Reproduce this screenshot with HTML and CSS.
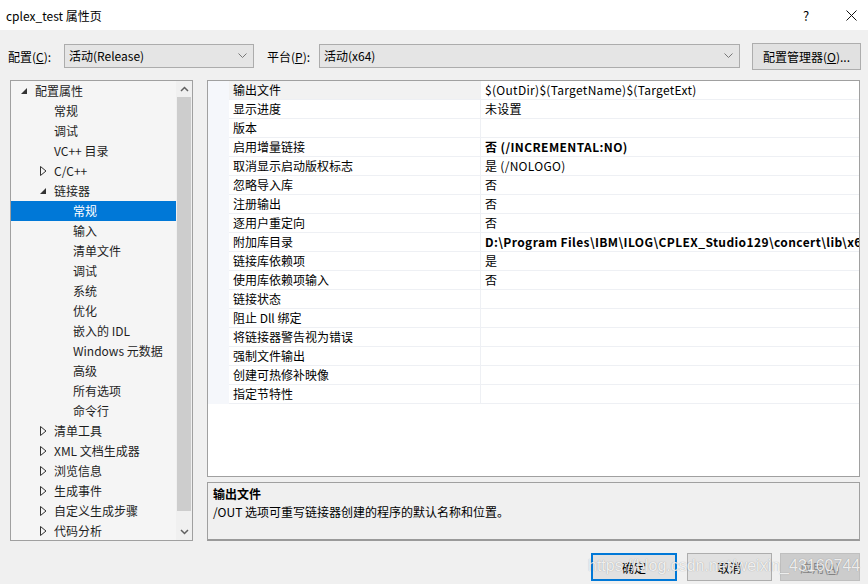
FILE: index.html
```html
<!doctype html>
<html lang="zh-CN">
<head>
	<meta charset="UTF-8" />
	<title>cplex_test 属性页</title>
<link rel="stylesheet" href="styles.css">
</head>
<body>
	<div class="window">
		<header class="titlebar">
			<span class="title">cplex_test 属性页</span>
			<span class="tb-help">?</span>
			<span class="tb-close">
				<svg width="11" height="11" viewBox="0 0 11 11"><path d="M0.5 0.5L10.5 10.5M10.5 0.5L0.5 10.5" stroke="#111" stroke-width="1"/></svg>
			</span>
		</header>

		<div class="toolbar">
			<label class="lbl lbl-config">配置(<u>C</u>):</label>
			<div class="select sel-config">
				<span>活动(Release)</span>
				<svg class="chev" width="9" height="5" viewBox="0 0 9 5"><path d="M0.5 0.5L4.5 4.5L8.5 0.5" fill="none" stroke="#777"/></svg>
			</div>
			<label class="lbl lbl-platform">平台(<u>P</u>):</label>
			<div class="select sel-platform">
				<span>活动(x64)</span>
				<svg class="chev" width="9" height="5" viewBox="0 0 9 5"><path d="M0.5 0.5L4.5 4.5L8.5 0.5" fill="none" stroke="#777"/></svg>
			</div>
			<button class="btn btn-manager">配置管理器(<u>O</u>)...</button>
		</div>

		<div class="main">
			<div class="tree">
				<ul class="tree-list">
					<li class="l0"><span class="tg"><svg width="6" height="6" viewBox="0 0 6 6"><path d="M6 0V6H0Z" fill="#333"/></svg></span>配置属性</li>
					<li class="l1"><span class="tg"></span>常规</li>
					<li class="l1"><span class="tg"></span>调试</li>
					<li class="l1"><span class="tg"></span>VC++ 目录</li>
					<li class="l1"><span class="tg"><svg width="7" height="10" viewBox="0 0 7 10"><path d="M0.5 0.5L6 5L0.5 9.5Z" fill="none" stroke="#333"/></svg></span>C/C++</li>
					<li class="l1"><span class="tg"><svg width="6" height="6" viewBox="0 0 6 6"><path d="M6 0V6H0Z" fill="#333"/></svg></span>链接器</li>
					<li class="l2 selected"><span class="tg"></span>常规</li>
					<li class="l2"><span class="tg"></span>输入</li>
					<li class="l2"><span class="tg"></span>清单文件</li>
					<li class="l2"><span class="tg"></span>调试</li>
					<li class="l2"><span class="tg"></span>系统</li>
					<li class="l2"><span class="tg"></span>优化</li>
					<li class="l2"><span class="tg"></span>嵌入的 IDL</li>
					<li class="l2"><span class="tg"></span>Windows 元数据</li>
					<li class="l2"><span class="tg"></span>高级</li>
					<li class="l2"><span class="tg"></span>所有选项</li>
					<li class="l2"><span class="tg"></span>命令行</li>
					<li class="l1"><span class="tg"><svg width="7" height="10" viewBox="0 0 7 10"><path d="M0.5 0.5L6 5L0.5 9.5Z" fill="none" stroke="#333"/></svg></span>清单工具</li>
					<li class="l1"><span class="tg"><svg width="7" height="10" viewBox="0 0 7 10"><path d="M0.5 0.5L6 5L0.5 9.5Z" fill="none" stroke="#333"/></svg></span>XML 文档生成器</li>
					<li class="l1"><span class="tg"><svg width="7" height="10" viewBox="0 0 7 10"><path d="M0.5 0.5L6 5L0.5 9.5Z" fill="none" stroke="#333"/></svg></span>浏览信息</li>
					<li class="l1"><span class="tg"><svg width="7" height="10" viewBox="0 0 7 10"><path d="M0.5 0.5L6 5L0.5 9.5Z" fill="none" stroke="#333"/></svg></span>生成事件</li>
					<li class="l1"><span class="tg"><svg width="7" height="10" viewBox="0 0 7 10"><path d="M0.5 0.5L6 5L0.5 9.5Z" fill="none" stroke="#333"/></svg></span>自定义生成步骤</li>
					<li class="l1"><span class="tg"><svg width="7" height="10" viewBox="0 0 7 10"><path d="M0.5 0.5L6 5L0.5 9.5Z" fill="none" stroke="#333"/></svg></span>代码分析</li>
				</ul>
				<div class="vscroll">
					<div class="arrow"><svg width="9" height="6" viewBox="0 0 9 6"><path d="M1 5L4.5 1.5L8 5" fill="none" stroke="#606060" stroke-width="1.5"/></svg></div>
					<div class="thumb"></div>
					<div class="track"></div>
					<div class="arrow"><svg width="9" height="6" viewBox="0 0 9 6"><path d="M1 1L4.5 4.5L8 1" fill="none" stroke="#606060" stroke-width="1.5"/></svg></div>
				</div>
			</div>

			<div class="right">
				<div class="grid">
					<div class="row current"><i></i><span class="name">输出文件</span><span class="val">$(OutDir)$(TargetName)$(TargetExt)</span></div>
					<div class="row"><i></i><span class="name">显示进度</span><span class="val">未设置</span></div>
					<div class="row"><i></i><span class="name">版本</span><span class="val"></span></div>
					<div class="row"><i></i><span class="name">启用增量链接</span><span class="val b">否 (/INCREMENTAL:NO)</span></div>
					<div class="row"><i></i><span class="name">取消显示启动版权标志</span><span class="val">是 (/NOLOGO)</span></div>
					<div class="row"><i></i><span class="name">忽略导入库</span><span class="val">否</span></div>
					<div class="row"><i></i><span class="name">注册输出</span><span class="val">否</span></div>
					<div class="row"><i></i><span class="name">逐用户重定向</span><span class="val">否</span></div>
					<div class="row"><i></i><span class="name">附加库目录</span><span class="val b">D:\Program Files\IBM\ILOG\CPLEX_Studio129\concert\lib\x64_windows_vs2017\stat_mda</span></div>
					<div class="row"><i></i><span class="name">链接库依赖项</span><span class="val">是</span></div>
					<div class="row"><i></i><span class="name">使用库依赖项输入</span><span class="val">否</span></div>
					<div class="row"><i></i><span class="name">链接状态</span><span class="val"></span></div>
					<div class="row"><i></i><span class="name">阻止 Dll 绑定</span><span class="val"></span></div>
					<div class="row"><i></i><span class="name">将链接器警告视为错误</span><span class="val"></span></div>
					<div class="row"><i></i><span class="name">强制文件输出</span><span class="val"></span></div>
					<div class="row"><i></i><span class="name">创建可热修补映像</span><span class="val"></span></div>
					<div class="row"><i></i><span class="name">指定节特性</span><span class="val"></span></div>
				</div>
				<div class="desc">
					<p class="desc-title">输出文件</p>
					<p class="desc-text">/OUT 选项可重写链接器创建的程序的默认名称和位置。</p>
				</div>
			</div>
		</div>

		<footer class="buttons">
			<button class="btn btn-ok">确定</button>
			<button class="btn btn-cancel">取消</button>
			<button class="btn btn-apply" disabled>应用(<u>A</u>)</button>
		</footer>

		<div class="watermark">https://blog.csdn.net/weixin_43160744</div>
	</div>
</body>
</html>
```

FILE: styles.css
```css
*{
	margin: 0;
	padding: 0;
	box-sizing: border-box;
}
html, body{
	width: 868px;
	height: 584px;
	overflow: hidden;
}
body{
	background: #f0f0f0;
	font-family: "Noto Sans CJK SC", "Noto Sans", sans-serif;
	font-size: 12px;
	color: #000;
}
.window{
	position: relative;
	width: 868px;
	height: 584px;
}

/* 标题栏 */
.titlebar{
	height: 30px;
	background: #fff;
	display: flex;
	align-items: center;
	padding-left: 6px;
}
.title{
	flex: 1;
	font-size: 12px;
}
.tb-help{
	width: 12px;
	font-size: 13px;
	margin-right: 31px;
}
.tb-close{
	display: flex;
	margin-right: 11px;
}

/* 配置 / 平台 */
.toolbar{
	display: flex;
	align-items: center;
	height: 27px;
	margin-top: 13px;
	padding-left: 8px;
	padding-bottom: 1px;
}
.lbl{
	white-space: nowrap;
}
.lbl-config{
	width: 56px;
}
.lbl-platform{
	width: 52px;
	margin-left: 13px;
}
.select{
	height: 24px;
	display: flex;
	align-items: center;
	justify-content: space-between;
	padding: 0 6px 1px 4px;
	background: #e5e5e5;
	border: 1px solid #acacac;
}
.sel-config{
	width: 190px;
}
.sel-platform{
	width: 421px;
}
.btn{
	font-family: inherit;
	font-size: 12px;
	color: #000;
	background: #e1e1e1;
	border: 1px solid #adadad;
}
.btn-manager{
	width: 109px;
	height: 27px;
	margin-left: 12px;
}

/* 主体 */
.main{
	display: flex;
	margin-top: 10px;
	padding-left: 10px;
}
.tree{
	width: 183px;
	height: 461px;
	display: flex;
	background: #f5f5f5;
	border: 1px solid #a0a0a0;
}
.tree-list{
	flex: 1;
	list-style: none;
	overflow: hidden;
	color: #1e1e1e;
}
.tree-list li{
	height: 20px;
	display: flex;
	align-items: center;
	padding-bottom: 2px;
	white-space: nowrap;
}
.tree-list li.l0{
	padding-left: 8px;
}
.tree-list li.l1{
	padding-left: 27px;
}
.tree-list li.l2{
	padding-left: 46px;
}
.tree-list li.selected{
	background: #0078d7;
	color: #fff;
}
.tg{
	width: 16px;
	display: flex;
	align-items: center;
	padding-left: 2px;
	padding-top: 1px;
}
.vscroll{
	width: 16px;
	display: flex;
	flex-direction: column;
	background: #f0f0f0;
}
.vscroll .arrow{
	height: 16px;
	display: flex;
	align-items: center;
	justify-content: center;
}
.vscroll .thumb{
	height: 414px;
	margin: 0 1px;
	background: #cdcdcd;
}
.vscroll .track{
	flex: 1;
}

.right{
	margin-left: 14px;
	width: 653px;
}
.grid{
	height: 397px;
	background: #fff;
	border: 1px solid #a0a0a0;
	overflow: hidden;
}
.row{
	height: 19px;
	display: grid;
	grid-template-columns: 21px 252px 1fr;
}
.row i{
	background: #f5f7fb;
}
.row .name,
.row .val{
	display: flex;
	align-items: center;
	padding-left: 4px;
	padding-bottom: 1px;
	white-space: nowrap;
	overflow: hidden;
	border-bottom: 1px solid #eef0f4;
}
.row .name{
	border-right: 1px solid #eef0f4;
}
.row .val{
	letter-spacing: 0.3px;
}
.row.current .name{
	background: #f2f2f2;
}
.val.b{
	font-weight: bold;
	letter-spacing: 0.4px;
}

.desc{
	height: 59px;
	margin-top: 5px;
	padding: 1px 5px;
	background: #f0f0f0;
	border: 1px solid #a0a0a0;
	border-bottom: 2px solid #9a9a9a;
}
.desc-title{
	font-weight: bold;
	line-height: 19px;
}
.desc-text{
	line-height: 18px;
}

/* 底部按钮 */
.buttons{
	display: flex;
	justify-content: flex-end;
	margin-top: 12px;
	padding-right: 8px;
}
.buttons .btn{
	height: 28px;
}
.btn-ok{
	width: 86px;
	border: 2px solid #0078d7;
}
.btn-cancel{
	width: 85px;
	margin-left: 10px;
}
.btn-apply{
	width: 80px;
	margin-left: 8px;
	background: #cccccc;
	border-color: #bfbfbf;
	color: #838383;
}

.watermark{
	position: absolute;
	left: 588px;
	top: 557px;
	font-family: "Liberation Sans", sans-serif;
	font-size: 16px;
	color: rgba(255, 255, 255, 0.85);
	text-shadow: 0 0 1px rgba(0, 0, 0, 0.35);
	white-space: nowrap;
	pointer-events: none;
}
```
